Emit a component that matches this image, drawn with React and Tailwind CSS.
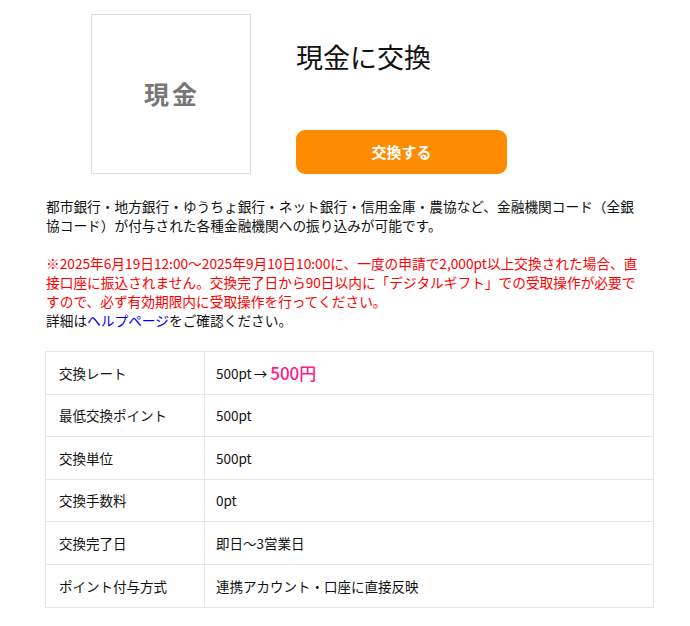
const rows = [
  { label: '交換レート', value: 'rate' },
  { label: '最低交換ポイント', value: '500pt' },
  { label: '交換単位', value: '500pt' },
  { label: '交換手数料', value: '0pt' },
  { label: '交換完了日', value: '即日〜3営業日' },
  { label: 'ポイント付与方式', value: '連携アカウント・口座に直接反映' },
];

export default function App() {
  return (
    <div className="w-[690px] min-h-[626px] bg-white text-[#111] font-['Noto_Sans_CJK_JP','Noto_Sans',sans-serif]">
      <div className="px-[45px] pt-[14px]">
        {/* Header */}
        <div className="flex pl-[46px] gap-[45px]">
          <div className="w-[160px] h-[160px] border border-[#dcdcdc] flex items-center justify-center">
            <span className="text-[25px] font-bold text-[#777] tracking-[3px] pl-[2px]">現金</span>
          </div>
          <div className="flex flex-col justify-between w-[211px]">
            <h1 className="mt-[27px] text-[27px] leading-[32px] text-[#111] whitespace-nowrap">現金に交換</h1>
            <button className="h-[44px] w-[211px] rounded-[9px] bg-[#ff8c00] text-white text-[15px] font-bold">
              交換する
            </button>
          </div>
        </div>

        {/* Description */}
        <p className="mt-[23px] w-[592px] ml-[1px] text-[13.7px] leading-[19px]">
          都市銀行・地方銀行・ゆうちょ銀行・ネット銀行・信用金庫・農協など、金融機関コード（全銀協コード）が付与された各種金融機関への振り込みが可能です。
          <br />
          <br />
          <span className="text-[#ff0000]">
            ※2025年6月19日12:00〜2025年9月10日10:00に、一度の申請で2,000pt以上交換された場合、直接口座に振込されません。交換完了日から90日以内に「デジタルギフト」での受取操作が必要ですので、必ず有効期限内に受取操作を行ってください。
          </span>
          <br />
          詳細は<a className="text-[#0000ee]">ヘルプページ</a>をご確認ください。
        </p>

        {/* Table */}
        <div className="mt-[21px] border border-[#e6e6e6] w-[609px]">
          {rows.map((r, i) => (
            <div
              key={r.label}
              className={`flex h-[42.5px] text-[13.5px] ${i < rows.length - 1 ? 'border-b border-[#e6e6e6]' : ''}`}
            >
              <div className="w-[159px] border-r border-[#e6e6e6] pl-[13px] flex items-center">{r.label}</div>
              <div className="flex-1 pl-[11px] flex items-center">
                {r.value === 'rate' ? (
                  <span className="flex items-center">
                    500pt<span className="ml-[2px] mr-[3px]">→</span>
                    <span className="text-[17px] text-[#ff1a84] font-medium">500円</span>
                  </span>
                ) : (
                  r.value
                )}
              </div>
            </div>
          ))}
        </div>
      </div>
    </div>
  );
}
